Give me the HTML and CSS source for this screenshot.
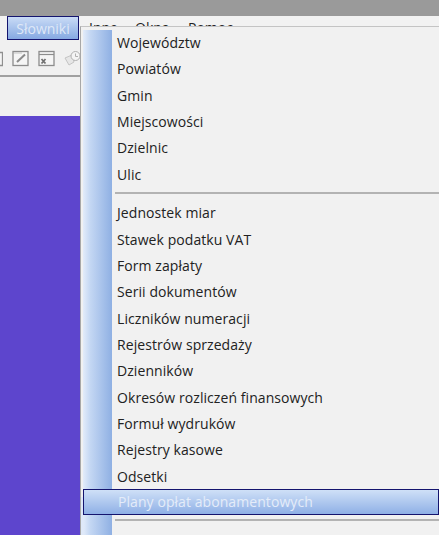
FILE: index.html
```html
<!DOCTYPE html>
<html lang="pl">
<head>
<meta charset="utf-8">
<title>Słowniki</title>
<link rel="stylesheet" href="styles.css">
</head>
<body>
<div class="app">
  <div class="titlebar"></div>
  <div class="menubar">
    <span class="menu-active">Słowniki</span>
    <span class="menu-item menu-item-a">Inne</span>
    <span class="menu-item menu-item-b">Okna</span>
    <span class="menu-item">Pomoc</span>
  </div>
  <div class="toolbar">
    <svg class="tool" width="3" height="17" viewBox="0 0 3 17"><path d="M-4 2.500H2.500V15.500H-4" fill="#f4f4f4" stroke="#8f8f8f" stroke-width="1.300"/></svg>
    <svg class="tool" width="17" height="17" viewBox="0 0 17 17"><rect x="1" y="1.500" width="15" height="14" fill="#f5f5f5" stroke="#8c8c8c" stroke-width="1.300"/><path d="M5 12L13 4.500" stroke="#8a8a8a" stroke-width="2"/><path d="M2 3h8" stroke="#c4c4c4"/></svg>
    <svg class="tool" width="17" height="17" viewBox="0 0 17 17"><rect x="1" y="1.500" width="15" height="14" fill="#f5f5f5" stroke="#8c8c8c" stroke-width="1.300"/><path d="M1 4.500H16" stroke="#8c8c8c" stroke-width="1.200"/><path d="M3.500 9l4 4.500M7.500 9l-4 4.500" stroke="#707070" stroke-width="1.800"/></svg>
    <svg class="tool" width="17" height="17" viewBox="0 0 17 17"><path d="M1 8l7-3 2 7-5 3z" fill="#e6e6e6" stroke="#c4c4c4"/><circle cx="11.500" cy="6" r="4.500" fill="#f4f4f4" stroke="#b0b0b0"/><path d="M11.500 3.500V6.500H14" fill="none" stroke="#b0b0b0"/></svg>
  </div>
  <div class="blank"></div>
  <div class="workspace"></div>

  <div class="menu">
    <div class="menu-row">Województw</div>
    <div class="menu-row">Powiatów</div>
    <div class="menu-row">Gmin</div>
    <div class="menu-row">Miejscowości</div>
    <div class="menu-row">Dzielnic</div>
    <div class="menu-row">Ulic</div>
    <div class="menu-sep"></div>
    <div class="menu-row">Jednostek miar</div>
    <div class="menu-row">Stawek podatku VAT</div>
    <div class="menu-row">Form zapłaty</div>
    <div class="menu-row">Serii dokumentów</div>
    <div class="menu-row">Liczników numeracji</div>
    <div class="menu-row">Rejestrów sprzedaży</div>
    <div class="menu-row">Dzienników</div>
    <div class="menu-row">Okresów rozliczeń finansowych</div>
    <div class="menu-row">Formuł wydruków</div>
    <div class="menu-row">Rejestry kasowe</div>
    <div class="menu-row">Odsetki</div>
    <div class="menu-row menu-row-active">Plany opłat abonamentowych</div>
    <div class="menu-sep menu-sep-last"></div>
  </div>
</div>
</body>
</html>
```
FILE: styles.css
```css
* { box-sizing: border-box; }
html, body { margin: 0; padding: 0; height: 100%; overflow: hidden; }
body { font-family: "Open Sans", "Noto Sans", sans-serif; font-size: 14px; color: #222; background: #f0f0f0; }
.app { position: relative; width: 439px; height: 535px; overflow: hidden; display: flex; flex-direction: column; }
.titlebar { height: 16px; background: #9a9a9a; }
.menubar { height: 24px; background: #f2f2f2; display: flex; align-items: flex-start; padding-left: 7px; font-size: 14px; }
.menu-active { width: 72px; height: 24px; border: 1px solid #14146e; background: linear-gradient(#c9dbf6, #86a9e2); color: #dfe8f7; display: flex; align-items: center; justify-content: center; flex: none; }
.menu-item { line-height: 24px; color: #222; }
.menu-item-a { margin-left: 10px; width: 46px; }
.menu-item-b { width: 53px; }
.toolbar { height: 37px; background: #f0f0f0; border-bottom: 2px solid #a0a0a0; display: flex; gap: 9px; padding: 10px 0 0; align-items: flex-start; }
.tool { display: block; flex: none; }
.blank { height: 39px; background: #f0f0f0; }
.workspace { flex: 1; background: #5d45cd; }
.menu { position: absolute; left: 80px; top: 26px; right: 0; bottom: 0; background: #f1f1f1; border-left: 1px solid #a8a8a8; border-top: 1px solid #c4c4c4; padding-top: 3px; }
.menu::before { content: ""; position: absolute; left: 2px; top: 3px; bottom: 0; width: 29px; background: linear-gradient(90deg, #e3ecfa, #c4d7f3 25%, #8fb0e3); }
.menu::after { content: ""; position: absolute; left: 0; top: 470px; bottom: 0; width: 3px; background: #dfe9f9; }
.menu-row { position: relative; height: 26.33px; line-height: 26.33px; padding-left: 36px; white-space: nowrap; font-size: 14px; letter-spacing: 0.07px; }
.menu-sep { height: 12.5px; margin: 0 0 0 34px; position: relative; }
.menu-sep::after { content: ""; position: absolute; left: 0; right: 0; top: 4px; height: 2px; background: #b3b3b3; }
.menu-row-active { margin-left: 2px; padding-left: 34px; height: 26px; line-height: 24px; border: 1px solid #14146e; background: linear-gradient(#cfe0f7, #8fb0e6); color: #e4ecf9; margin-top: -1px; z-index: 1; }
.menu-sep-last { margin-top: 0; }
```
